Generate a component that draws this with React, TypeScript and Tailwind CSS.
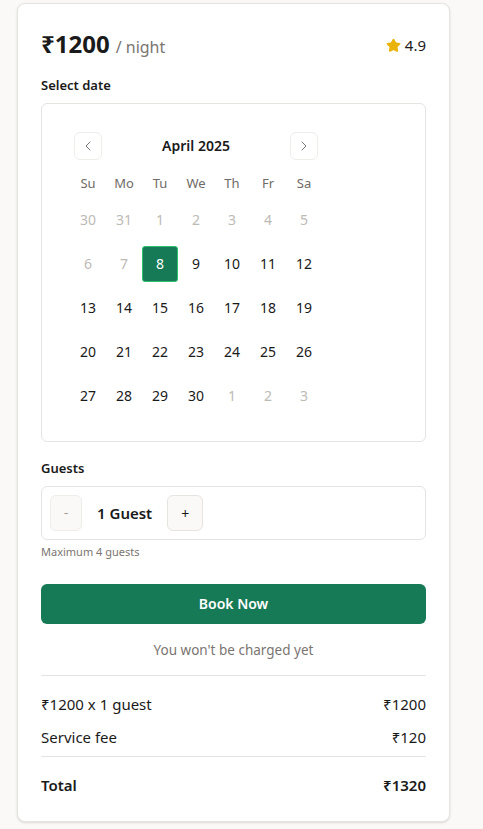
import React, { useState } from 'react';
import { ChevronLeft, ChevronRight, Star } from 'lucide-react';

const weekDays = ['Su', 'Mo', 'Tu', 'We', 'Th', 'Fr', 'Sa'];

type Day = { n: number; outside?: boolean; past?: boolean };

const weeks: Day[][] = [
  [{ n: 30, outside: true }, { n: 31, outside: true }, { n: 1, past: true }, { n: 2, past: true }, { n: 3, past: true }, { n: 4, past: true }, { n: 5, past: true }],
  [{ n: 6, past: true }, { n: 7, past: true }, { n: 8 }, { n: 9 }, { n: 10 }, { n: 11 }, { n: 12 }],
  [{ n: 13 }, { n: 14 }, { n: 15 }, { n: 16 }, { n: 17 }, { n: 18 }, { n: 19 }],
  [{ n: 20 }, { n: 21 }, { n: 22 }, { n: 23 }, { n: 24 }, { n: 25 }, { n: 26 }],
  [{ n: 27 }, { n: 28 }, { n: 29 }, { n: 30 }, { n: 1, outside: true }, { n: 2, outside: true }, { n: 3, outside: true }],
];

const Calendar: React.FC<{ selected: number; onSelect: (n: number) => void }> = ({ selected, onSelect }) => {
  return (
    <div className="border border-[#e6e4e1] rounded-md pt-[28px] pb-[27px] pl-[28px]">
      <div className="w-[252px]">
        <div className="flex items-center justify-between px-1 h-[28px]">
          <button className="w-7 h-7 flex items-center justify-center rounded-md border border-[#efedea] text-[#777]">
            <ChevronLeft className="w-4 h-4" strokeWidth={1.5} />
          </button>
          <span className="text-[14px] font-semibold text-[#1a1a1a]">April 2025</span>
          <button className="w-7 h-7 flex items-center justify-center rounded-md border border-[#efedea] text-[#777]">
            <ChevronRight className="w-4 h-4" strokeWidth={1.5} />
          </button>
        </div>
        <div className="grid grid-cols-7 mt-[15px]">
          {weekDays.map((d) => (
            <div key={d} className="h-[18px] flex items-center justify-center text-[13px] text-[#6f6b66]">
              {d}
            </div>
          ))}
        </div>
        <div className="flex flex-col gap-2 mt-[9px]">
          {weeks.map((w, i) => (
            <div key={i} className="grid grid-cols-7">
              {w.map((d, j) => {
                const isSel = !d.outside && !d.past && d.n === selected;
                const muted = d.outside || d.past;
                return (
                  <button
                    key={j}
                    onClick={() => !muted && onSelect(d.n)}
                    className={`h-9 w-9 flex items-center justify-center rounded-[3px] text-[14px] ${
                      isSel
                        ? 'bg-[#177a57] text-white border border-[#2fbf6f]'
                        : muted
                        ? 'text-[#bdbab6]'
                        : 'text-[#1a1a1a]'
                    }`}
                  >
                    {d.n}
                  </button>
                );
              })}
            </div>
          ))}
        </div>
      </div>
    </div>
  );
};

export default function App() {
  const [selected, setSelected] = useState(8);
  const [guests, setGuests] = useState(1);
  const price = 1200;
  const fee = 120;

  return (
    <div
      className="min-h-screen bg-[#faf9f7] pt-[3px] pl-[17px]"
      style={{ fontFamily: '"Noto Sans", "Open Sans", sans-serif' }}
    >
      <div className="w-[433px] bg-white border border-[#e6e4e1] rounded-lg shadow-sm px-[23px] pt-[26px] pb-[25px] text-[#1a1a1a]">
        <div className="flex items-center justify-between h-[30px]">
          <div className="flex items-baseline gap-1.5">
            <span className="text-[24px] font-bold leading-none">₹{price}</span>
            <span className="text-[16px] text-[#7a7570]">/ night</span>
          </div>
          <div className="flex items-center gap-1 text-[15px]">
            <Star className="w-[15px] h-[15px] text-[#eab308] fill-[#eab308]" />
            <span>4.9</span>
          </div>
        </div>

        <div className="mt-[16px] text-[13px] font-semibold">Select date</div>
        <div className="mt-[7px]">
          <Calendar selected={selected} onSelect={setSelected} />
        </div>

        <div className="mt-[17px] text-[13px] font-semibold">Guests</div>
        <div className="mt-[8px] border border-[#e6e4e1] rounded-md h-[54px] flex items-center px-2 gap-[15px]">
          <button
            onClick={() => setGuests(Math.max(1, guests - 1))}
            className="w-8 h-9 rounded-md bg-[#faf9f7] border border-[#efedea] text-[#9a958f] text-[13px]"
          >
            -
          </button>
          <span className="text-[15px] font-semibold">{guests} Guest{guests > 1 ? 's' : ''}</span>
          <button
            onClick={() => setGuests(Math.min(4, guests + 1))}
            className="w-9 h-9 rounded-md bg-[#faf9f7] border border-[#e6e4e1] text-[#1a1a1a] text-[14px]"
          >
            +
          </button>
        </div>
        <div className="mt-[4px] text-[11px] text-[#7a7570]">Maximum 4 guests</div>

        <button className="mt-[23px] w-full h-10 rounded-md bg-[#177a57] text-white text-[14px] font-semibold">
          Book Now
        </button>
        <div className="mt-[16px] text-center text-[13.5px] text-[#7a7570]">You won't be charged yet</div>

        <div className="mt-[15px] border-t border-[#e6e4e1]" />
        <div className="mt-[17px] flex justify-between text-[15px]">
          <span>₹{price} x {guests} guest{guests > 1 ? 's' : ''}</span>
          <span>₹{price * guests}</span>
        </div>
        <div className="mt-[11px] flex justify-between text-[15px]">
          <span>Service fee</span>
          <span>₹{fee}</span>
        </div>
        <div className="mt-[7px] border-t border-[#e6e4e1]" />
        <div className="mt-[17px] flex justify-between text-[15px] font-semibold">
          <span>Total</span>
          <span>₹{price * guests + fee}</span>
        </div>
      </div>
    </div>
  );
}
